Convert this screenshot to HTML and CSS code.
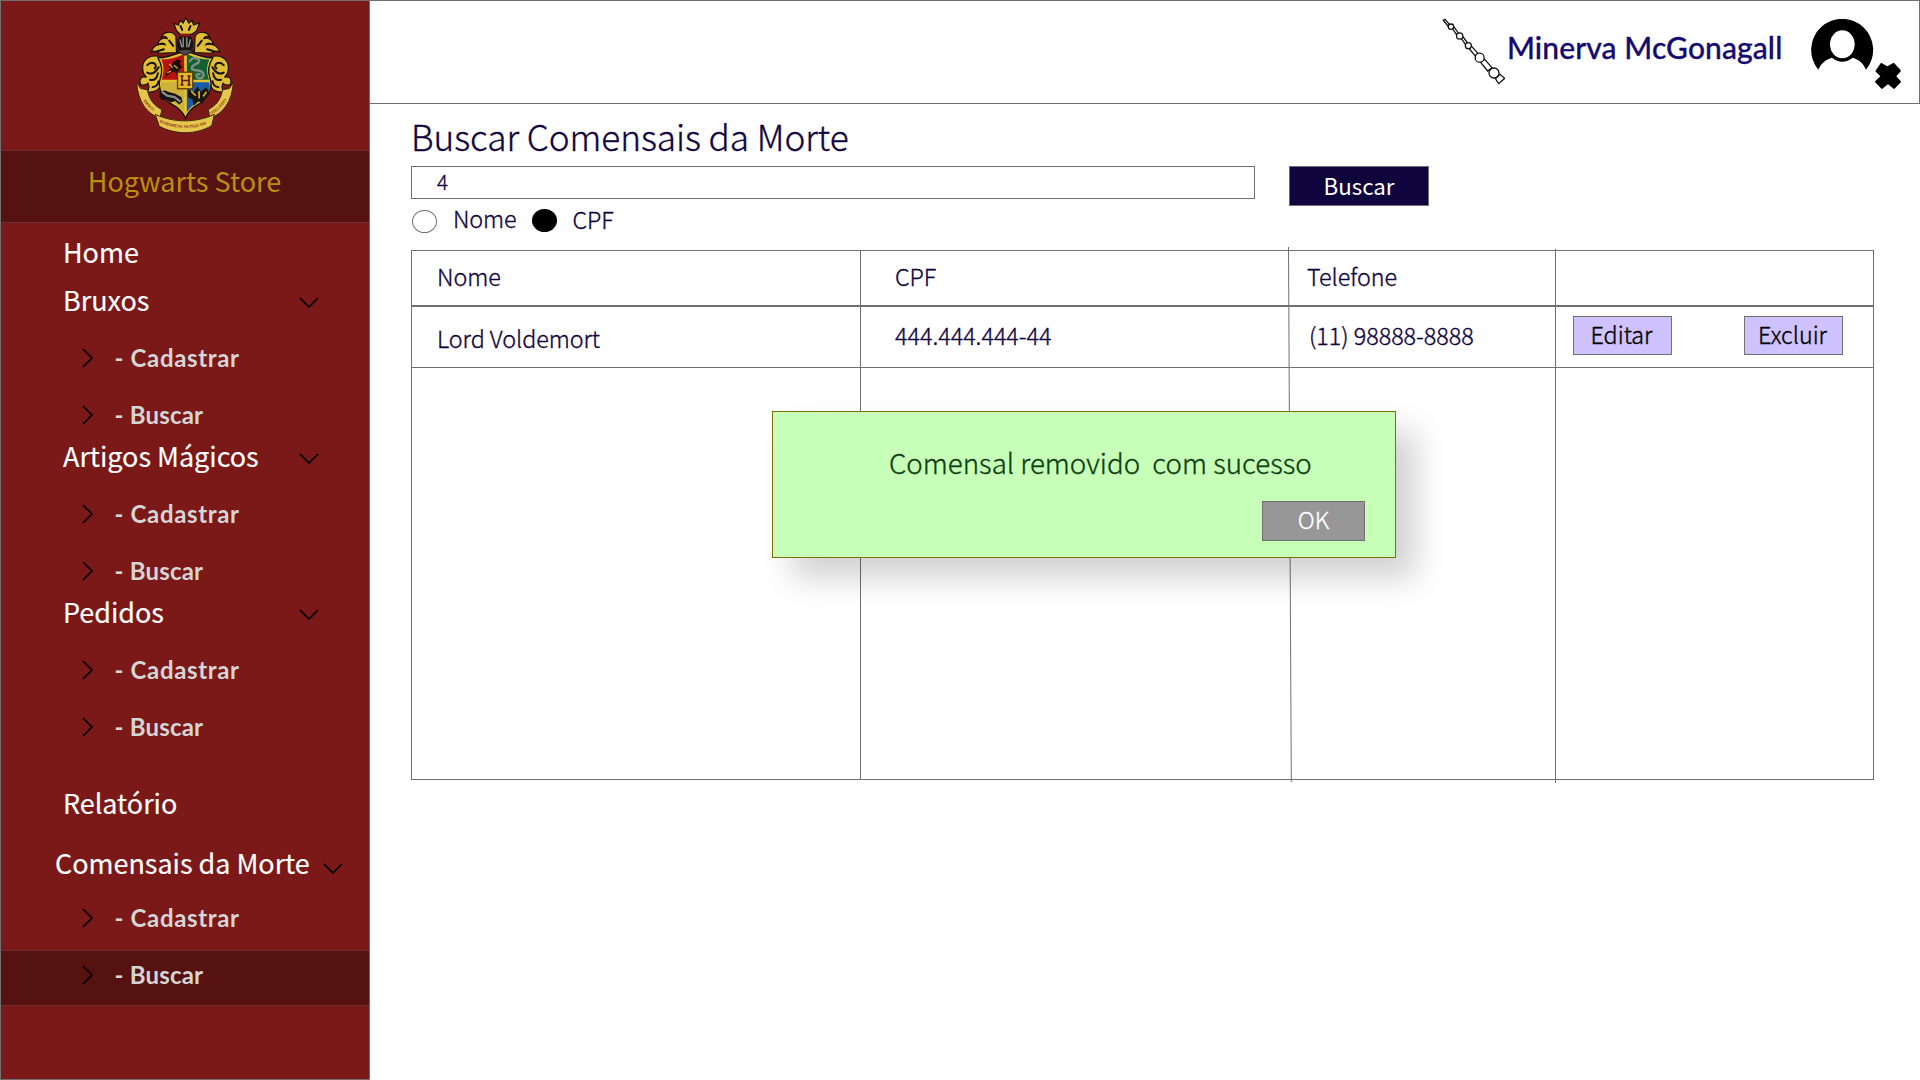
FILE: index.html
```html
<!DOCTYPE html>
<html lang="pt-BR">
<head>
<meta charset="utf-8">
<title>Hogwarts Store</title>
<link rel="stylesheet" href="styles.css">
</head>
<body>
<svg class="defs" width="0" height="0">
  <symbol id="down" viewBox="0 0 20 12"><path d="M1 1l9 9 9-9" fill="none" stroke="#000" stroke-width="1.7"/></symbol>
  <symbol id="right" viewBox="0 0 12 20"><path d="M1 1l9 9-9 9" fill="none" stroke="#000" stroke-width="1.7"/></symbol>
</svg>
<div class="app">
  <aside class="sidebar">
    <div class="crest">
      <svg width="98" height="117" viewBox="50 52 295 350">
        <!-- mantling -->
        <g fill="#e0bd34" stroke="#15100a" stroke-width="3.5">
          <path d="M172 92l-8-22 14 5 4-14 10 8 8-16 9 16 10-8 4 14 18-6-9 24-14 10h-34z"/>
          <path d="M170 108c-14-18-38-12-44 4 8-6 18-2 18 4-14-4-30 6-26 18 6-6 16-6 20 0-18-4-36 2-42 22 10-4 18-2 24 4l52-2z"/>
          <path d="M228 108c14-18 38-12 44 4-8-6-18-2-18 4 14-4 30 6 26 18-6-6-16-6-20 0 18-4 36 2 42 22-10-4-18-2-24 4l-52-2z"/>
          <path d="M126 172c-28-10-56 2-56 32 0 12 4 22 12 28-16-4-24 6-18 22 8 4 18 0 22-4 6 14 4 20-4 26 24 4 40-6 42-24l12-46z"/>
          <path d="M272 172c28-10 56 2 56 32 0 12-4 22-12 28 16-4 24 6 18 22-8 4-18 0-22-4-6 14-4 20 4 26-24 4-40-6-42-24l-12-46z"/>
        </g>
        <g fill="none" stroke="#15100a" stroke-width="6" stroke-linecap="round">
          <path d="M84 196c14-16 34-2 22 10M84 218c14 8 26-2 34-16M92 240c14 4 22-6 24-20M100 262c10 0 16-8 18-18"/>
          <path d="M314 196c-14-16-34-2-22 10M314 218c-14 8-26-2-34-16M306 240c-14 4-22-6-24-20M298 262c-10 0-16-8-18-18"/>
          <path d="M150 122l12 16M248 122l-12 16M184 78l5 12M214 78l-5 12M114 154l20-6M284 154l-20-6"/>
        </g>
        <!-- quartered shield -->
        <path d="M116 174c24 0 48-8 83-22 34 14 58 22 82 22-14 22-16 42-8 62 10 26-8 64-36 78-18 10-30 20-38 42-8-22-22-32-40-42-28-14-46-52-36-78 8-20 6-40-7-62z" fill="#e3c233" stroke="#15100a" stroke-width="4"/>
        <path d="M126 179c22 0 44-6 69-17v78h-68c8-22 8-42-1-61z" fill="#b81212"/>
        <path d="M203 162c25 11 47 17 68 17-9 19-9 39-1 61h-67z" fill="#12602e"/>
        <path d="M126 247h69v91c-8-14-20-24-36-32-24-14-40-38-33-59z" fill="#cdb23c"/>
        <path d="M203 247h67c8 22-8 46-33 60-15 8-26 18-34 31z" fill="#1c5aa6"/>
        <!-- lion -->
        <path d="M140 196l16 4 6-14 12-8 12 4-4 10 8 12-12 4 8 22-12-4-8-12-14 6-14 12 4-14 12-12-4-6z" fill="#1d0f08"/>
        <path d="M150 192l10 12M164 196l12 10M144 218l12-4" stroke="#d9a52c" stroke-width="4"/>
        <!-- snake -->
        <path d="M212 184c8-14 30-10 28 0s-20 8-22 20 28 2 34 16-12 20-18 12 4-12 8-8" fill="none" stroke="#7e8f88" stroke-width="7" stroke-linecap="round"/>
        <!-- badger -->
        <path d="M120 280c8-10 18-10 26-4l22 6 18 10 4 14-10 8-12-10-14 4-14-10-12 4-8-12z" fill="#15130f"/>
        <path d="M128 276l16 12 22 4 18 14" fill="none" stroke="#8b8b88" stroke-width="7"/>
        <!-- raven -->
        <path d="M208 268l14 10 14-18 8 16 18-14 10 20-16 14-6 16-12-8-14 14-4-18-14-8z" fill="#1a150c"/>
        <path d="M216 274l14 14M240 274v22M262 276l-10 14" stroke="#d9b52c" stroke-width="5"/>
        <rect x="175" y="217" width="46" height="50" fill="#e3b72c" stroke="#5a3c08" stroke-width="4"/>
        <path d="M184 229h9M205 229h9M184 255h9M205 255h9M188.500 229v26M209.500 229v26M188.500 242h21" fill="none" stroke="#5c1c0c" stroke-width="5"/>
        <!-- helmet -->
        <path d="M176 146c-6-24 2-40 22-44 20 4 28 20 22 44l-22 16z" fill="#15130f"/>
        <path d="M182 118l6 24M192 112v30M203 112v30M214 118l-6 24" stroke="#9a9a9a" stroke-width="4"/>
        <path d="M170 152l28-4 28 4-28 14z" fill="#4a4650" stroke="#15100a" stroke-width="3"/>
        <path d="M184 106h28" stroke="#a51515" stroke-width="6"/>
        <!-- motto ribbon -->
        <g fill="#e6c54c" stroke="#3a2406" stroke-width="3">
          <path d="M52 248l12 18 20 4c8 34 20 46 44 60l-6 26c-38-14-66-48-70-108z"/>
          <path d="M343 248l-12 18-20 4c-8 34-20 46-44 60l6 26c38-14 66-48 70-108z"/>
          <path d="M108 344c56 26 122 26 178 0l-8 34c-48 28-108 28-158 2z"/>
        </g>
        <g class="motto">
          <path id="m1" d="M72 303q16 26 48 42" fill="none"/>
          <path id="m2" d="M120 368q78 34 158 0" fill="none"/>
          <path id="m3" d="M274 346q40-20 56-62" fill="none"/>
          <text textLength="44" lengthAdjust="spacingAndGlyphs"><textPath href="#m1">DRACO</textPath></text>
          <text textLength="146" lengthAdjust="spacingAndGlyphs"><textPath href="#m2">DORMIENS NUNQUAM</textPath></text>
          <text textLength="68" lengthAdjust="spacingAndGlyphs"><textPath href="#m3">TITILLANDUS</textPath></text>
        </g>
      </svg>
    </div>
    <div class="brand">Hogwarts Store</div>
    <nav class="nav">
      <div class="head home">Home</div>
      <section class="group">
        <div class="head">Bruxos<svg class="down"><use href="#down"/></svg></div>
        <div class="sub"><svg class="right"><use href="#right"/></svg><span class="wide">- Cadastrar</span></div>
        <div class="sub"><svg class="right"><use href="#right"/></svg><span>- Buscar</span></div>
      </section>
      <section class="group">
        <div class="head">Artigos Mágicos<svg class="down"><use href="#down"/></svg></div>
        <div class="sub"><svg class="right"><use href="#right"/></svg><span class="wide">- Cadastrar</span></div>
        <div class="sub"><svg class="right"><use href="#right"/></svg><span>- Buscar</span></div>
      </section>
      <section class="group">
        <div class="head">Pedidos<svg class="down"><use href="#down"/></svg></div>
        <div class="sub"><svg class="right"><use href="#right"/></svg><span class="wide">- Cadastrar</span></div>
        <div class="sub"><svg class="right"><use href="#right"/></svg><span>- Buscar</span></div>
      </section>
      <div class="head report">Relatório</div>
      <section class="group eaters">
        <div class="head">Comensais da Morte<svg class="down"><use href="#down"/></svg></div>
        <div class="sub"><svg class="right"><use href="#right"/></svg><span class="wide">- Cadastrar</span></div>
        <div class="sub active"><svg class="right"><use href="#right"/></svg><span>- Buscar</span></div>
      </section>
    </nav>
  </aside>

  <div class="page">
    <header class="topbar">
      <svg class="wand" width="63" height="67" viewBox="66 55 189 201" fill="#fff" stroke="#111" stroke-width="3.8">
        <path d="M70 62l5-3 14 16-5 4z"/>
        <path d="M97 86l5-4 13 18-6 4z"/>
        <path d="M122 114l6-4 15 20-6 5z"/>
        <path d="M146 145l8-6 20 22-9 7z"/>
        <path d="M182 188l12-9 22 25-13 10z"/>
        <path d="M226 237l14-13 14 12-18 16z"/>
        <circle cx="93" cy="81" r="8"/><circle cx="119" cy="109" r="9.5"/><circle cx="145" cy="138" r="9"/><circle cx="179" cy="174" r="13.5"/><circle cx="222" cy="220" r="15"/>
      </svg>
      <span class="user">Minerva McGonagall</span>
      <svg class="avatar" width="90" height="70" viewBox="1175 57 270 210">
        <path d="M1197 209A93 93 0 1 1 1340 209C1332 189 1318 178 1300 173C1281 189 1257 189 1238 173C1220 178 1205 189 1197 209Z"/>
        <ellipse cx="1269" cy="133" rx="37" ry="42" fill="#fff"/>
        <path d="M1384 190q2-2 4 0l16 9 16-9q2-2 5 0l18 19q3 3 0 6l-12 14 12 13q3 3 0 6l-16 17q-3 3-6 0l-15-12-15 12q-3 3-6 0l-16-17q-3-3 0-6l14-13-13-13q-3-3 0-6z"/>
      </svg>
    </header>
    <main class="content">
      <h1>Buscar Comensais da Morte</h1>
      <div class="search">
        <div class="field">4</div>
        <button class="go">Buscar</button>
      </div>
      <div class="filters">
        <i class="radio"></i><span class="by-name">Nome</span>
        <i class="radio on"></i><span class="by-cpf">CPF</span>
      </div>
      <div class="table">
        <div class="tr th"><span>Nome</span><span>CPF</span><span>Telefone</span><span></span></div>
        <div class="tr"><span class="name">Lord Voldemort</span><span>444.444.444-44</span><span class="phone">(11) 98888-8888</span><span class="actions"><button>Editar</button><button>Excluir</button></span></div>
        <svg class="rules" width="1466" height="540" viewBox="0 0 1466 540" fill="none" stroke="#707070">
          <path d="M449.5 5v529M877.500 1L880.3 536M1144.500 3v534"/>
        </svg>
        <div class="dialog">
          <p>Comensal removido&nbsp; com sucesso</p>
          <button>OK</button>
        </div>
      </div>
    </main>
  </div>
</div>
</body>
</html>
```
FILE: styles.css
```css
* { box-sizing: border-box; }
body { margin: 0; background: #fff; font-family: "Noto Sans CJK JP", "Open Sans", sans-serif; color: #10043e; }
h1, p { margin: 0; font-weight: 300; }
button { font: inherit; border: 1px solid #707070; padding: 0 0 3px; }
.defs { display: block; }
.app { display: flex; width: 1920px; height: 1080px; overflow: hidden; }

.sidebar { width: 370px; height: 1080px; background: #7b1818; border: 1px solid #707070; font-size: 27px; color: #fff; }
.crest { height: 149px; padding: 16px 0 0 135px; }
.crest svg { display: block; }
.motto { fill: #8a3010; font: bold 13px "Liberation Serif", serif; }
.brand { height: 73px; border: solid #712e2e; border-width: 1px 0; background: #561111; color: #b8900c; line-height: 60px; padding-right: 1px; text-align: center; font-size: 27px; }
.nav { padding-top: 11px; }
.head { height: 36px; padding: 0 50px 0 62px; display: flex; align-items: center; justify-content: space-between; line-height: 36px; -webkit-text-stroke: .15px; letter-spacing: -.04px; }
.home { margin-bottom: 12px; }
.down { width: 20px; height: 12px; margin-top: 6px; }
.right { width: 12px; height: 20px; }
.sub { flex: none; height: 44px; padding-left: 81px; display: flex; align-items: center; gap: 20.500px; font: 700 24px/44px Lato, sans-serif; color: #d5d5d5; letter-spacing: .2px; }
.sub .wide { letter-spacing: .65px; }
.group { display: flex; flex-direction: column; height: 156px; }
.group .head { margin-bottom: 18px; }
.group .sub + .sub { margin-top: 13px; }
.report { margin-top: 35px; margin-bottom: 24px; }
.eaters .head { padding: 0 26px 0 54px; margin-bottom: 15px; letter-spacing: -.04px; }
.eaters .down { margin-top: 12px; }
.eaters .sub + .active { height: 56px; margin-top: 10px; padding-bottom: 6px; background: #561111; border: solid #712e2e; border-width: 1px 0; }

.page { flex: 1; }
.topbar { height: 104px; border: 1px solid #707070; border-left: 0; padding: 17px 18px 0 0; display: flex; justify-content: flex-end; align-items: flex-start; }
.user { font: 500 30px/36px Lato, sans-serif; color: #150a70; margin: 11px 27px 0 2px; width: 277px; white-space: nowrap; letter-spacing: .1px; -webkit-text-stroke: .3px; }
.avatar { margin-top: 1px; }

.content { padding: 8px 0 0 41px; font-weight: 300; font-size: 23.3px; -webkit-text-stroke: .35px; }
h1 { font-size: 35.2px; line-height: 48px; margin-bottom: 6px; letter-spacing: -.05px; }
.search { display: flex; gap: 34px; height: 40px; }
.field { width: 844px; height: 33px; border: 1px solid #707070; padding-left: 25px; font-size: 20.5px; line-height: 28px; }
.go { width: 140px; height: 40px; background: #10043e; color: #fff; font-weight: 400; font-size: 22.3px; -webkit-text-stroke: 0; }
.filters { height: 44px; display: flex; align-items: flex-start; line-height: 24px; letter-spacing: -.1px; }
.radio { width: 25px; height: 23px; border: 1px solid #707070; border-radius: 50%; margin: 4px 16px 0 1px; }
.radio.on { background: #000; border-color: #000; margin: 3px 16px 0 15px; }
.by-cpf { padding-top: 1px; }

.table { position: relative; width: 1463px; height: 530px; border: 1px solid #707070; }
.tr { display: grid; grid-template-columns: 448px 429px 266px 1fr; height: 61px; border-bottom: 1px solid #707070; line-height: 57px; white-space: nowrap; }
.th { height: 56px; border-bottom-width: 2px; line-height: 51px; }
.tr span { padding-left: 35px; }
.tr span:first-child { padding-left: 25px; letter-spacing: -.05px; }
.tr span:nth-child(3) { padding-left: 18px; }
.tr .name { line-height: 62px; }
.tr span.phone { padding-left: 20px; }
.tr span.actions { padding: 9px 0 0 18px; display: flex; gap: 72px; }
.actions button { width: 99px; height: 39px; padding: 0 2px 4px 0; background: #cec2ff; color: #000; line-height: 32px; }
.rules { position: absolute; left: -1px; top: -5px; }
.dialog { position: absolute; left: 360px; top: 160px; width: 624px; height: 147px; background: #c7ffb9; border: 1px solid #7a7000; box-shadow: 20px 20px 30px rgba(0,0,0,.18); display: flex; flex-direction: column; align-items: flex-end; color: #0d3d10; }
.dialog p { width: 506px; margin-top: 30px; font-size: 27.700px; line-height: 40px; white-space: nowrap; }
.dialog button { margin: 19px 30px 0 0; width: 103px; height: 40px; padding-bottom: 5px; line-height: 32px; background: #979797; color: #fff; }
```
